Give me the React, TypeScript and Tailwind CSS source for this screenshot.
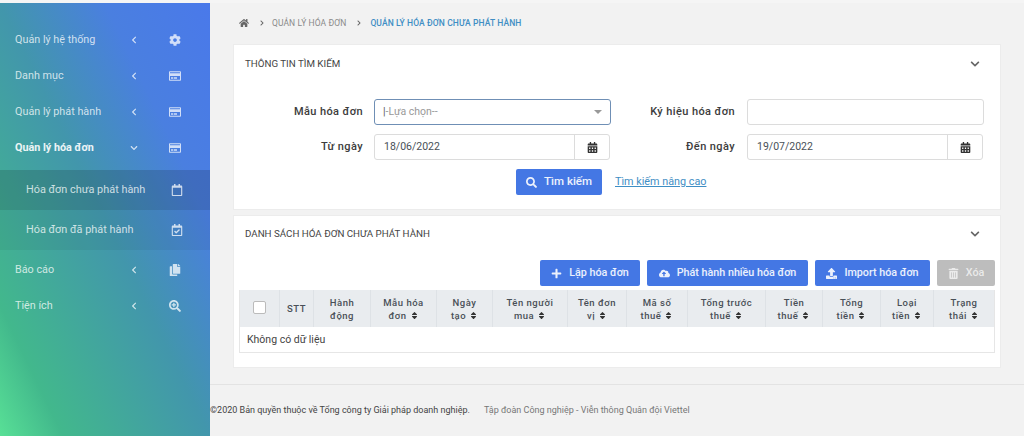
import {
  FaCalendarAlt,
  FaChevronDown,
  FaChevronLeft,
  FaChevronRight,
  FaCloudUploadAlt,
  FaCog,
  FaCopy,
  FaHome,
  FaPlus,
  FaRegCalendar,
  FaRegCalendarCheck,
  FaRegCreditCard,
  FaSearch,
  FaSearchPlus,
  FaSort,
  FaTrashAlt,
  FaUpload,
} from "react-icons/fa";

function MenuRow({ label, icon, open }: { label: string; icon: React.ReactNode; open?: boolean }) {
  return (
    <div className="flex h-9 items-center text-[10.8px] text-white/75">
      <span className={`ml-[15px] w-[115px] ${open ? "font-bold text-white/90" : ""}`}>{label}</span>
      <span className="flex w-[8px] justify-center text-[8px]">{open ? <FaChevronDown /> : <FaChevronLeft />}</span>
      <span className="ml-[31px] flex w-[12px] justify-center text-[12px]">{icon}</span>
    </div>
  );
}

function SubRow({ label, icon, className }: { label: string; icon: React.ReactNode; className: string }) {
  return (
    <div className={`flex h-[40px] items-center text-[10.9px] text-white/75 ${className}`}>
      <span className="ml-[26px] w-[145px]">{label}</span>
      <span className="text-[12px]">{icon}</span>
    </div>
  );
}

function Sidebar() {
  return (
    <aside className="h-[433px] w-[210px] shrink-0 bg-[linear-gradient(to_top_right,#58e096_0%,#42b88c_15%,#4296ac_50%,#4a7fe0_75%,#4a79ea_100%)] pt-[19px]">
      <MenuRow label="Quản lý hệ thống" icon={<FaCog />} />
      <MenuRow label="Danh mục" icon={<FaRegCreditCard />} />
      <MenuRow label="Quản lý phát hành" icon={<FaRegCreditCard />} />
      <MenuRow label="Quản lý hóa đơn" icon={<FaRegCreditCard />} open />
      <SubRow label="Hóa đơn chưa phát hành" icon={<FaRegCalendar />} className="mt-[4px] bg-black/15" />
      <SubRow label="Hóa đơn đã phát hành" icon={<FaRegCalendarCheck />} className="bg-black/5" />
      <div className="mt-[2px]">
        <MenuRow label="Báo cáo" icon={<FaCopy />} />
        <MenuRow label="Tiện ích" icon={<FaSearchPlus />} />
      </div>
    </aside>
  );
}

function CardHeader({ title, height }: { title: string; height: string }) {
  return (
    <div className={`flex items-center justify-between pl-[11px] pr-[20px] text-[9.75px] text-[#444] ${height}`}>
      <span>{title}</span>
      <FaChevronDown className="text-[10px] text-[#666]" />
    </div>
  );
}

function Label({ text, width }: { text: string; width: string }) {
  return <label className={`${width} text-right text-[11px] font-medium tracking-[0.4px] text-[#3c3c3c]`}>{text}</label>;
}

function DateField({ value }: { value: string }) {
  return (
    <div className="flex h-[26px] w-[236px] items-center rounded-[3px] border border-[#dcdcdc] bg-white text-[10.5px] text-[#495057]">
      <span className="flex-1 pl-[9px]">{value}</span>
      <span className="flex h-full w-[35px] items-center justify-center border-l border-[#dcdcdc] text-[11px] text-[#333]">
        <FaCalendarAlt />
      </span>
    </div>
  );
}

function ActionButton({ icon, label, className, muted }: { icon: React.ReactNode; label: string; className: string; muted?: boolean }) {
  return (
    <button className={`flex h-[26px] items-center justify-center gap-[7px] rounded-[2px] font-medium ${muted ? "bg-[#bdbdbd] text-white/70" : "bg-[#4477e4] text-white/90"} ${className}`}>
      <span className="text-[11px]">{icon}</span>
      {label}
    </button>
  );
}

const columns = [
  { a: "Hành", b: "động", sort: false },
  { a: "Mẫu hóa", b: "đơn", sort: true },
  { a: "Ngày", b: "tạo", sort: true },
  { a: "Tên người", b: "mua", sort: true },
  { a: "Tên đơn", b: "vị", sort: true },
  { a: "Mã số", b: "thuế", sort: true },
  { a: "Tổng trước", b: "thuế", sort: true },
  { a: "Tiền", b: "thuế", sort: true },
  { a: "Tổng", b: "tiền", sort: true },
  { a: "Loại", b: "tiền", sort: true },
  { a: "Trạng", b: "thái", sort: true },
];

function InvoiceTable() {
  return (
    <div className="mx-[5px] mt-[4px] w-[756px] border-x border-b border-[#e6e6e6]">
      <div className="grid h-[37px] grid-cols-[40px_34px_57px_66px_56px_75px_59px_61px_78px_57px_58px_53px_1fr] bg-[#e9ecef] text-center text-[9.5px] font-medium leading-[13px] tracking-[0.5px] text-[#495057]">
        <div className="flex items-center justify-center border-r border-[#dee2e6]">
          <span className="mb-[2px] h-[13px] w-[13px] rounded-[2px] border border-[#bbb] bg-white" />
        </div>
        <div className="flex items-center justify-center border-r border-[#dee2e6]">STT</div>
        {columns.map((col) => (
          <div key={col.a} className="flex flex-col items-center justify-center border-r border-[#dee2e6] last:border-r-0">
            <span>{col.a}</span>
            <span className="flex items-center gap-[3px]">
              {col.b}
              {col.sort && <FaSort className="text-[9px] text-[#333]" />}
            </span>
          </div>
        ))}
      </div>
      <div className="flex h-[25px] items-center pl-[7px] text-[10.5px] text-[#444]">Không có dữ liệu</div>
    </div>
  );
}

export default function App() {
  return (
    <div className="h-[436px] w-[1024px] overflow-hidden border-t-[3px] border-[#f5f5f5] bg-[#f2f2f2] font-['Roboto',sans-serif]">
      <div className="flex">
        <Sidebar />
        <main className="flex-1 pl-[23px]">
          <nav className="flex h-[41px] items-center pb-[1px] pl-[6px] text-[8.5px] tracking-[0.1px] text-[#8a8a8a]">
            <FaHome className="text-[10px] text-[#666]" />
            <FaChevronRight className="ml-[10px] text-[6px] text-[#666]" />
            <span className="ml-[7px]">QUẢN LÝ HÓA ĐƠN</span>
            <FaChevronRight className="ml-[10px] text-[6px] text-[#666]" />
            <span className="ml-[8px] font-medium text-[#3f8ec4]">QUẢN LÝ HÓA ĐƠN CHƯA PHÁT HÀNH</span>
          </nav>

          <section className="h-[166px] w-[768px] border border-[#ececec] bg-white">
            <CardHeader title="THÔNG TIN TÌM KIẾM" height="h-[38px]" />
            <div className="mt-[16px] flex h-[26px] items-center">
              <Label text="Mẫu hóa đơn" width="w-[129px]" />
              <div className="ml-[11px] flex h-[26px] w-[237px] items-center justify-between rounded-[3px] border border-[#6f8fb5] bg-white pl-[8px] pr-[8px] text-[10.5px] text-[#999]">
                <span>
                  <span className="text-[#555]">|</span>-Lựa chọn--
                </span>
                <span className="h-0 w-0 border-x-[4px] border-t-[4px] border-x-transparent border-t-[#999]" />
              </div>
              <Label text="Ký hiệu hóa đơn" width="w-[124px]" />
              <div className="ml-[12px] h-[26px] w-[237px] rounded-[3px] border border-[#dcdcdc] bg-white" />
            </div>
            <div className="mt-[9px] flex h-[26px] items-center">
              <Label text="Từ ngày" width="w-[129px]" />
              <div className="ml-[11px]">
                <DateField value="18/06/2022" />
              </div>
              <Label text="Đến ngày" width="w-[125px]" />
              <div className="ml-[12px]">
                <DateField value="19/07/2022" />
              </div>
            </div>
            <div className="ml-[282px] mt-[9px] flex items-center">
              <ActionButton icon={<FaSearch />} label="Tìm kiếm" className="w-[86px] text-[11.5px]" />
              <a className="ml-[13px] text-[10.8px] text-[#3f8ec4] underline">Tìm kiếm nâng cao</a>
            </div>
          </section>

          <section className="mt-[5px] h-[153px] w-[768px] border border-[#ececec] bg-white">
            <CardHeader title="DANH SÁCH HÓA ĐƠN CHƯA PHÁT HÀNH" height="h-[36px]" />
            <div className="mt-[8px] flex justify-end gap-[7px] pr-[5px]">
              <ActionButton icon={<FaPlus />} label="Lập hóa đơn" className="w-[100px] text-[10.75px]" />
              <ActionButton icon={<FaCloudUploadAlt />} label="Phát hành nhiều hóa đơn" className="w-[161px] text-[10.75px]" />
              <ActionButton icon={<FaUpload />} label="Import hóa đơn" className="w-[115px] text-[10.75px]" />
              <ActionButton icon={<FaTrashAlt />} label="Xóa" className="w-[58px] text-[10.75px]" muted />
            </div>
            <InvoiceTable />
          </section>

          <footer className="-ml-[23px] mt-[16px] flex h-[52px] items-center border-t border-[#e3e3e3] text-[9px] text-[#444]">
            <span>©2020 Bản quyền thuộc về Tổng công ty Giải pháp doanh nghiệp.</span>
            <span className="ml-[14px] text-[#777]">Tập đoàn Công nghiệp - Viễn thông Quân đội Viettel</span>
          </footer>
        </main>
      </div>
    </div>
  );
}
